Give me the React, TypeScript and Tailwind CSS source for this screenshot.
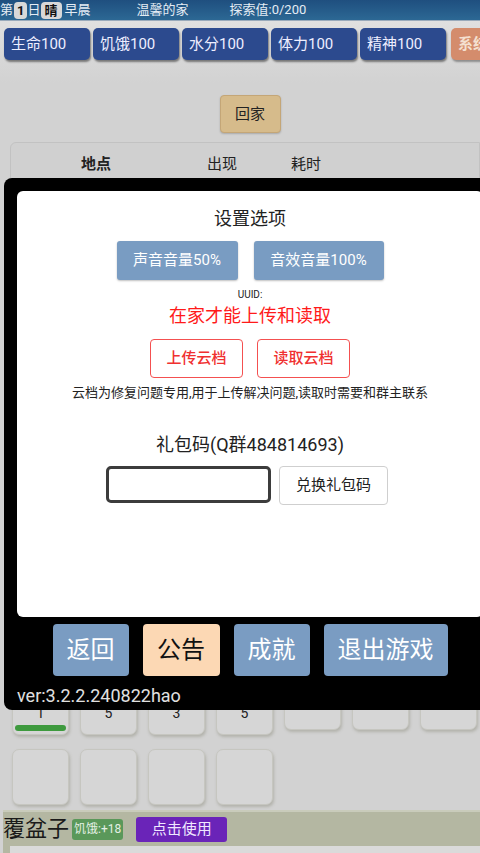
import React from "react";

const font = { fontFamily: 'Roboto, "Noto Sans CJK SC", sans-serif' };

export default function App() {
  const stats = ["生命100", "饥饿100", "水分100", "体力100", "精神100"];
  const row1 = ["1", "5", "3", "5", "", "", ""];
  return (
    <div className="relative w-[480px] h-[853px] overflow-hidden bg-[#d2d2d2] text-[#222]" style={font}>
      {/* top bar */}
      <div className="h-[21px] flex items-center text-[13px] text-[#e4ecf4] bg-gradient-to-b from-[#1f4f7f] to-[#2c6894] border-b border-[#9ab]">
        <span>第</span>
        <span className="ml-[1px] px-[3px] h-[17px] leading-[17px] rounded-[4px] bg-[#d8d8d8] text-[#111] font-bold">1</span>
        <span>日</span>
        <span className="px-[4px] h-[17px] leading-[17px] rounded-[4px] bg-[#d8d8d8] text-[#111] font-bold">晴</span>
        <span className="ml-[3px]">早晨</span>
        <span className="ml-[46px]">温馨的家</span>
        <span className="ml-[41px]">探索值:0/200</span>
      </div>
      {/* stats */}
      <div className="flex gap-[3px] pl-[4px] pt-[7px] h-[62px] bg-gradient-to-b from-[#e0e0e0] to-[#d2d2d2]">
        {stats.map((s) => (
          <div key={s} className="w-[86px] h-[32px] shrink-0 flex items-center pl-[7px] text-[15px] text-[#eef] bg-[#2c4a8e] rounded-[5px] shadow-[1px_2px_2px_rgba(0,0,0,0.45)]">
            {s}
          </div>
        ))}
        <div className="ml-[2px] w-[50px] h-[32px] shrink-0 flex items-center pl-[7px] text-[15px] font-bold text-[#f4e0d0] bg-[#d48c6c] rounded-[5px] shadow-[1px_2px_2px_rgba(0,0,0,0.35)]">
          系统
        </div>
      </div>
      {/* go home */}
      <div className="flex justify-center mt-[12px] pl-[20px]">
        <div className="w-[61px] h-[38px] flex items-center justify-center text-[15px] bg-[#d6bb8b] border border-[#c4a677] rounded-[4px] shadow-[0_1px_2px_rgba(0,0,0,0.2)]">
          回家
        </div>
      </div>
      {/* table panel */}
      <div className="ml-[10px] mt-[9px] h-[530px] border border-[#c2c2c2] rounded-tl-[6px] bg-[#d0d0d0]">
        <div className="flex text-[15px] h-[42px] items-center">
          <span className="ml-[70px] font-bold">地点</span>
          <span className="ml-[96px]">出现</span>
          <span className="ml-[54px]">耗时</span>
        </div>
      </div>
      {/* inventory */}
      <div className="pl-[12px] mt-[7px] flex flex-col gap-[14px]">
        <div className="flex gap-[11px] items-start">
          {row1.map((n, i) => (
            <div
              key={i}
              className={`w-[57px] ${n ? "h-[56px]" : "h-[51px]"} rounded-[7px] bg-[#d6d6d6] border border-[#c6c6c0] shadow-[1px_2px_3px_rgba(120,120,100,0.35)] flex flex-col items-center justify-end pb-[3px] text-[14px] leading-none text-[#222]`}
            >
              {n && <span className="mb-[5px]">{n}</span>}
              {i === 0 ? <div className="w-[51px] h-[6px] rounded-full bg-[#3e9a3e]" /> : n ? <div className="h-[6px]" /> : null}
            </div>
          ))}
        </div>
        <div className="flex gap-[11px]">
          {[0, 1, 2, 3].map((i) => (
            <div key={i} className="w-[57px] h-[56px] rounded-[7px] bg-[#d6d6d6] border border-[#c6c6c0] shadow-[1px_2px_3px_rgba(120,120,100,0.35)]" />
          ))}
        </div>
      </div>
      {/* bottom item bar */}
      <div className="absolute left-[3px] right-0 top-[810px] bottom-0 bg-[#b4b7a2] border-t-2 border-[#c9cbbb]">
        <div className="flex items-center h-[34px]">
          <span className="text-[22px] leading-none text-[#1a1a1a]">覆盆子</span>
          <span className="ml-[3px] px-[2px] h-[21px] leading-[21px] text-[12px] text-[#e4f0e4] bg-[#5a985a] rounded-[3px]">饥饿:+18</span>
          <span className="ml-[13px] w-[91px] h-[25px] flex items-center justify-center text-[15px] text-[#f0e8ff] bg-[#6a24b8] rounded-[3px]">点击使用</span>
        </div>
        <div className="ml-[7px] h-[12px] bg-[#dadada]" />
      </div>

      {/* settings overlay */}
      <div className="absolute left-[4px] top-[178px] w-[492px] h-[532px] bg-black rounded-[8px] px-[13px] pt-[13px]">
        <div className="h-[426px] bg-white rounded-[6px] flex flex-col items-center text-[#222]">
          <div className="mt-[16px] text-[18px] leading-[24px]">设置选项</div>
          <div className="mt-[10px] flex gap-[16px]">
            <div className="w-[121px] h-[39px] flex items-center justify-center text-[15px] text-white bg-[#799cc2] rounded-[3px] shadow-[0_1px_2px_rgba(0,0,0,0.25)]">声音音量50%</div>
            <div className="w-[130px] h-[39px] flex items-center justify-center text-[15px] text-white bg-[#799cc2] rounded-[3px] shadow-[0_1px_2px_rgba(0,0,0,0.25)]">音效音量100%</div>
          </div>
          <div className="mt-[9px] text-[10px] leading-[12px]">UUID:</div>
          <div className="mt-[3px] text-[18px] leading-[24px] text-[#ff1a1a]">在家才能上传和读取</div>
          <div className="mt-[11px] flex gap-[14px]">
            <div className="w-[93px] h-[39px] flex items-center justify-center text-[15px] font-medium text-[#f03030] bg-white border border-[#f45050] rounded-[4px]">上传云档</div>
            <div className="w-[93px] h-[39px] flex items-center justify-center text-[15px] font-medium text-[#f03030] bg-white border border-[#f45050] rounded-[4px]">读取云档</div>
          </div>
          <div className="mt-[7px] text-[13px] leading-[16px] text-[#222]">云档为修复问题专用,用于上传解决问题,读取时需要和群主联系</div>
          <div className="mt-[32px] text-[18px] leading-[24px]">礼包码(Q群484814693)</div>
          <div className="mt-[9px] flex gap-[8px] items-start pr-[6px]">
            <div className="w-[165px] h-[37px] border-[3px] border-[#3c3c3c] rounded-[5px] bg-white" />
            <div className="w-[109px] h-[39px] flex items-center justify-center text-[15px] bg-white border border-[#cfcfcf] rounded-[4px]">兑换礼包码</div>
          </div>
        </div>
        <div className="mt-[7px] flex justify-center gap-[14px]">
          <div className="w-[76px] h-[52px] flex items-center justify-center text-[24px] text-white bg-[#7a9cc2] rounded-[4px]">返回</div>
          <div className="w-[77px] h-[52px] flex items-center justify-center text-[24px] text-[#111] bg-[#fcd8b4] rounded-[4px]">公告</div>
          <div className="w-[76px] h-[52px] flex items-center justify-center text-[24px] text-white bg-[#7a9cc2] rounded-[4px]">成就</div>
          <div className="w-[124px] h-[52px] flex items-center justify-center text-[24px] text-white bg-[#7a9cc2] rounded-[4px]">退出游戏</div>
        </div>
        <div className="mt-[9px] text-[18px] leading-[22px] text-[#e0e0e0]">ver:3.2.2.240822hao</div>
      </div>
    </div>
  );
}
